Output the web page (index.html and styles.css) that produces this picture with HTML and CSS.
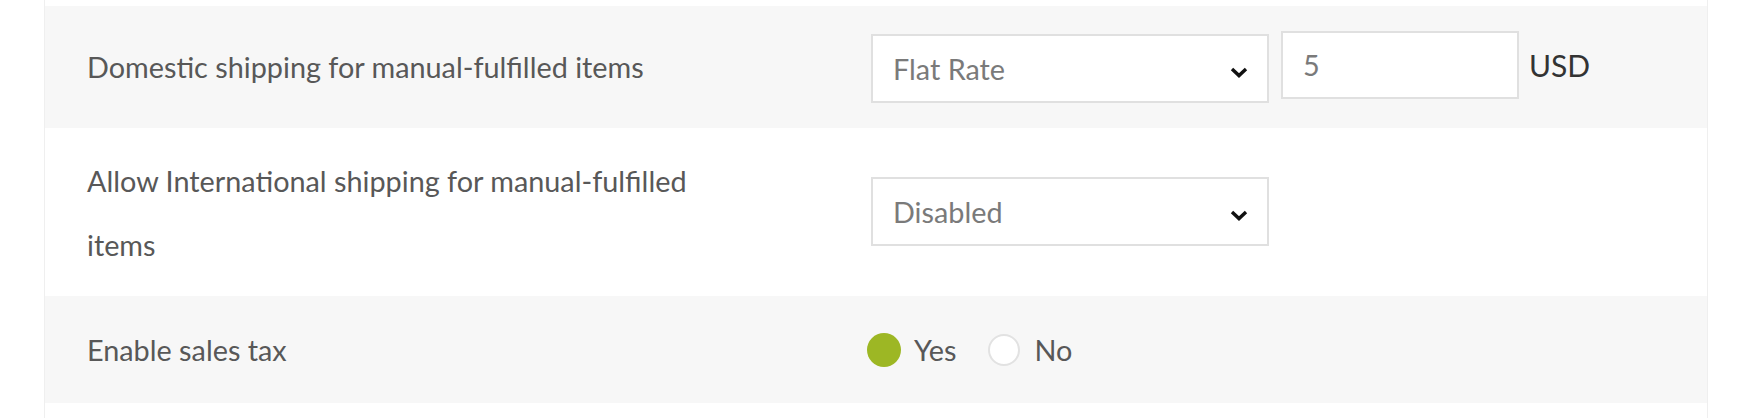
FILE: index.html
```html
<!DOCTYPE html>
<html lang="en">
<head>
<meta charset="utf-8">
<title>Shipping settings</title>
<link rel="stylesheet" href="styles.css">
</head>
<body>
<div class="panel">
  <div class="row row-top"></div>

  <div class="row row-gray row-1">
    <div class="label">Domestic shipping for manual-fulfilled items</div>
    <div class="controls controls-top">
      <div class="select select-offset">
        <span class="select-text">Flat Rate</span>
        <svg class="chevron" viewBox="0 0 18 11" width="18" height="11" aria-hidden="true"><path d="M2 2 L9 8.6 L16 2" fill="none" stroke="#111" stroke-width="3.4"/></svg>
      </div>
      <div class="input">5</div>
      <div class="unit">USD</div>
    </div>
  </div>

  <div class="row row-white row-2">
    <div class="label">Allow International shipping for manual-fulfilled items</div>
    <div class="controls">
      <div class="select select-lift">
        <span class="select-text">Disabled</span>
        <svg class="chevron" viewBox="0 0 18 11" width="18" height="11" aria-hidden="true"><path d="M2 2 L9 8.6 L16 2" fill="none" stroke="#111" stroke-width="3.4"/></svg>
      </div>
    </div>
  </div>

  <div class="row row-gray row-3">
    <div class="label">Enable sales tax</div>
    <div class="controls">
      <div class="radios">
        <label class="radio"><span class="dot dot-on"></span><span class="radio-text">Yes</span></label>
        <label class="radio"><span class="dot dot-off"></span><span class="radio-text">No</span></label>
      </div>
    </div>
  </div>

  <div class="row row-white row-bottom"></div>
</div>
</body>
</html>
```

FILE: styles.css
```css
html, body {
  margin: 0;
  padding: 0;
  background: #ffffff;
}

body {
  font-family: Lato, "Open Sans", "Liberation Sans", sans-serif;
  font-size: 28.8px;
  color: #585858;
}

.panel {
  margin-left: 44px;
  width: 1664px;
  min-height: 418px;
  box-sizing: border-box;
  border-left: 1px solid #efefef;
  border-right: 1px solid #efefef;
  display: flex;
  flex-direction: column;
}

.row {
  display: grid;
  grid-template-columns: 826px 1fr;
  align-items: center;
}

.row-top {
  height: 6px;
  background: #ffffff;
}

.row-gray {
  background: #f7f7f7;
}

.row-white {
  background: #ffffff;
}

.row-1 {
  padding: 25px 0;
}

.row-2 {
  padding: 21px 0 19px;
}

.row-3 {
  padding: 22px 0 21px;
}

.row-bottom {
  flex: 1;
}

.label {
  padding-left: 42px;
  width: 650px;
  line-height: 64px;
  color: #585858;
}

.controls {
  display: flex;
  align-items: center;
}

.controls-top {
  align-items: flex-start;
}

.select {
  width: 398px;
  height: 69px;
  box-sizing: border-box;
  border: 2px solid #e0e0e0;
  background: #ffffff;
  display: flex;
  align-items: center;
  justify-content: space-between;
  padding: 0 19px 0 20px;
}

.select-offset {
  margin-top: 3px;
}

.select-lift {
  margin-bottom: 3px;
}

.select-text {
  color: #7a7a7a;
}

.chevron {
  display: block;
  margin-top: 7px;
}

.input {
  width: 238px;
  height: 68px;
  box-sizing: border-box;
  margin-left: 12px;
  border: 2px solid #e0e0e0;
  background: #ffffff;
  padding: 0 20px;
  display: flex;
  align-items: center;
  color: #7a7a7a;
}

.unit {
  align-self: center;
  margin-left: 10px;
  margin-bottom: 4px;
  color: #333333;
  font-size: 30px;
}

.radios {
  display: flex;
  align-items: center;
  margin-left: -4px;
}

.radio {
  display: flex;
  align-items: center;
}

.radio + .radio {
  margin-left: 31px;
}

.dot {
  display: block;
  box-sizing: border-box;
  border-radius: 50%;
}

.dot-on {
  width: 34px;
  height: 34px;
  background: #9db724;
  margin-right: 13px;
}

.dot-off {
  width: 32px;
  height: 32px;
  background: #ffffff;
  border: 2px solid #e2e2e2;
  margin-right: 15px;
}

.radio-text {
  color: #585858;
  line-height: 64px;
}
```
